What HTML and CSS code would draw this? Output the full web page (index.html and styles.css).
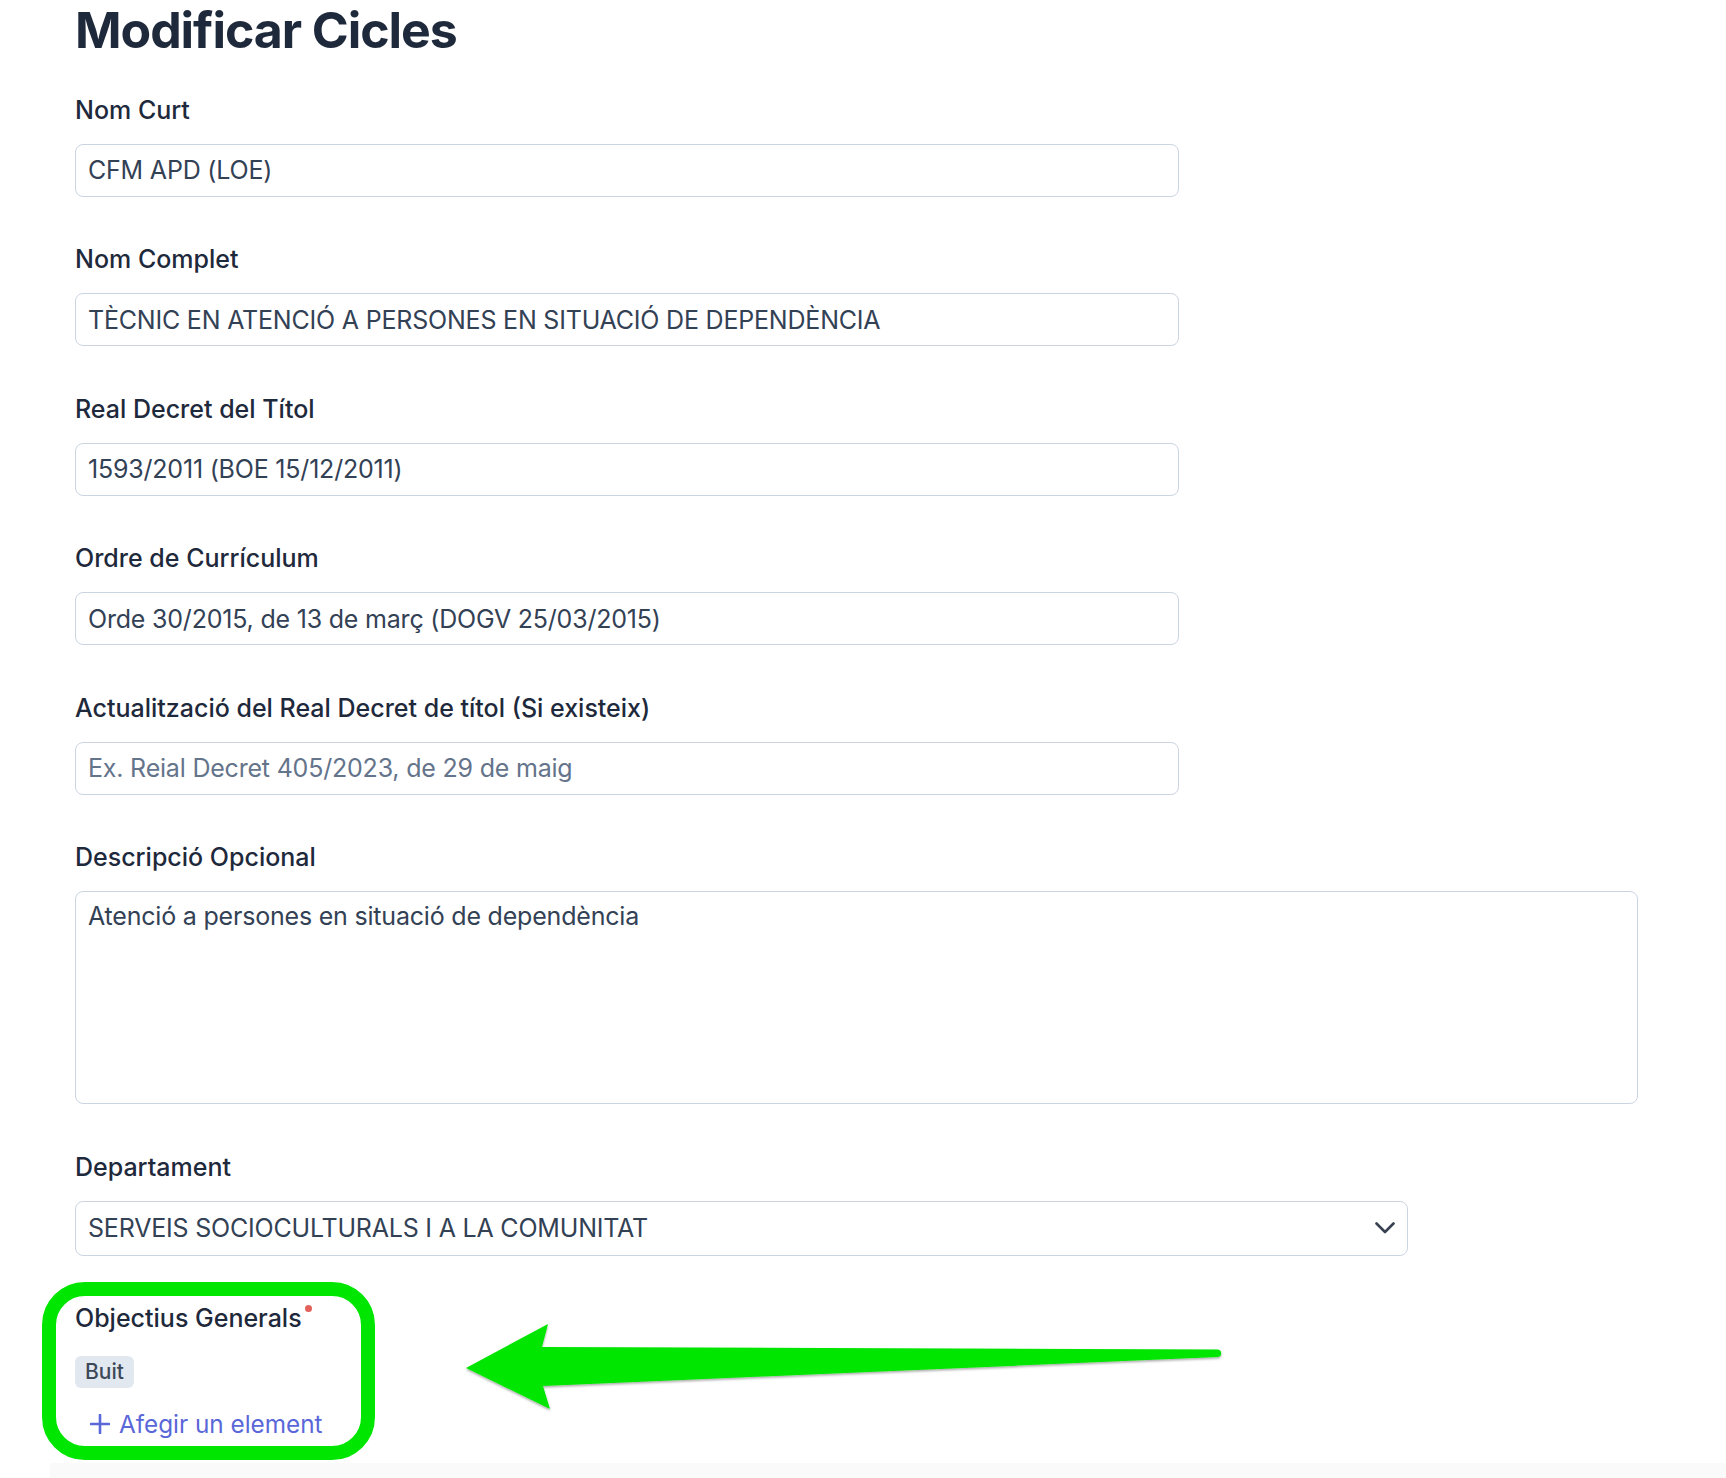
FILE: index.html
```html
<!DOCTYPE html>
<html lang="ca">
<head>
<meta charset="utf-8">
<title>Modificar Cicles</title>
<link rel="stylesheet" href="styles.css">
</head>
<body>
<main class="page">
  <h1 class="title">Modificar Cicles</h1>
  <form class="form">
    <div class="field">
      <label class="label">Nom Curt</label>
      <input class="input" type="text" value="CFM APD (LOE)">
    </div>
    <div class="field">
      <label class="label">Nom Complet</label>
      <input class="input" type="text" value="TÈCNIC EN ATENCIÓ A PERSONES EN SITUACIÓ DE DEPENDÈNCIA">
    </div>
    <div class="field">
      <label class="label">Real Decret del Títol</label>
      <input class="input" type="text" value="1593/2011 (BOE 15/12/2011)">
    </div>
    <div class="field">
      <label class="label">Ordre de Currículum</label>
      <input class="input" type="text" value="Orde 30/2015, de 13 de març (DOGV 25/03/2015)">
    </div>
    <div class="field">
      <label class="label">Actualització del Real Decret de títol (Si existeix)</label>
      <input class="input" type="text" placeholder="Ex. Reial Decret 405/2023, de 29 de maig">
    </div>
    <div class="field">
      <label class="label">Descripció Opcional</label>
      <textarea class="textarea">Atenció a persones en situació de dependència</textarea>
    </div>
    <div class="field">
      <label class="label">Departament</label>
      <div class="select-wrap">
        <select class="select">
          <option>SERVEIS SOCIOCULTURALS I A LA COMUNITAT</option>
        </select>
        <svg class="chevron" width="20" height="12" viewBox="0 0 20 12"><path d="M1.5 1.5 L10 10 L18.5 1.5" fill="none" stroke="#374151" stroke-width="2.6" stroke-linecap="round" stroke-linejoin="round"/></svg>
      </div>
    </div>
    <div class="field field-last">
      <label class="label">Objectius Generals<span class="req"></span></label>
      <div class="badges"><span class="badge">Buit</span></div>
      <button type="button" class="add-btn">
        <svg class="plus" width="20" height="20" viewBox="0 0 20 20"><path d="M10 1 V19 M1 10 H19" stroke="#5a67d8" stroke-width="2.6" stroke-linecap="round"/></svg>
        <span>Afegir un element</span>
      </button>
    </div>
  </form>
</main>
<div class="footer"></div>
<svg class="annot" width="1726" height="1478" viewBox="0 0 1726 1478">
  <defs>
    <filter id="sh" x="-5%" y="-50%" width="110%" height="200%">
      <feDropShadow dx="0" dy="1.5" stdDeviation="1" flood-color="#000" flood-opacity="0.35"/>
    </filter>
  </defs>
  <rect x="49" y="1289" width="319" height="164" rx="36" ry="36" fill="none" stroke="#00e600" stroke-width="14"/>
  <path filter="url(#sh)" d="M466 1368 L548 1324 L542 1347 L1218 1349.5 A3.8 3.8 0 0 1 1218 1357 L543 1386 L550 1409 Z" fill="#00e600"/>
</svg>
</body>
</html>
```
FILE: styles.css
```css
html, body {
  margin: 0;
  padding: 0;
  background: #ffffff;
}
body {
  font-family: Inter, "Noto Sans", "Liberation Sans", sans-serif;
  color: #1e293b;
  position: relative;
  width: 1726px;
  min-height: 1478px;
  overflow: hidden;
}
.page {
  padding: 0 0 21px 75px;
}
.title {
  margin: 0;
  font-size: 50px;
  font-weight: 700;
  line-height: 61.7px;
  color: #1e293b;
  letter-spacing: -1.05px;
}
.form {
  margin-top: 30px;
  display: flex;
  flex-direction: column;
  gap: 44.5px;
}
.field {
  display: flex;
  flex-direction: column;
  align-items: flex-start;
  gap: 16px;
}
.label {
  display: block;
  font-size: 25px;
  font-weight: 500;
  line-height: 36px;
  color: #1e293b;
  position: relative;
}
.input, .textarea, .select {
  box-sizing: border-box;
  font-family: inherit;
  font-size: 25px;
  letter-spacing: -0.2px;
  color: #334155;
  border: 1px solid #cbd5e1;
  border-radius: 8px;
  background: #fff;
  margin: 0;
  outline: none;
}
.input {
  width: 1104px;
  height: 53px;
  padding: 0 12px;
}
.input::placeholder {
  color: #64748b;
  opacity: 1;
}
.textarea {
  width: 1563px;
  height: 213px;
  padding: 9px 12px;
  resize: none;
  line-height: 31.5px;
  display: block;
}
.select-wrap {
  position: relative;
  width: 1333px;
}
.select {
  width: 1333px;
  height: 55px;
  padding: 0 12px;
  appearance: none;
  -webkit-appearance: none;
  display: block;
}
.chevron {
  position: absolute;
  right: 13px;
  top: 21.5px;
}
.req {
  position: absolute;
  right: -10px;
  top: 5px;
  width: 7px;
  height: 7px;
  border-radius: 50%;
  background: #e3605b;
}
.field-last {
  gap: 0;
}
.badges {
  margin-top: 19.5px;
  display: flex;
}
.badge {
  display: inline-block;
  box-sizing: border-box;
  height: 32px;
  line-height: 32px;
  padding: 0 10px;
  border-radius: 6px;
  background: #e2e8f0;
  color: #3c4858;
  font-size: 21px;
  font-weight: 500;
}
.add-btn {
  margin-top: 18px;
  display: flex;
  align-items: center;
  gap: 9px;
  background: none;
  border: none;
  padding: 0 0 0 15px;
  height: 36px;
  font-family: inherit;
  font-size: 24.3px;
  color: #5a67d8;
  cursor: pointer;
}
.plus {
  display: block;
}
.footer {
  margin-left: 50px;
  height: 40px;
  background: #fafafa;
}
.annot {
  position: absolute;
  left: 0;
  top: 0;
  pointer-events: none;
}
```
